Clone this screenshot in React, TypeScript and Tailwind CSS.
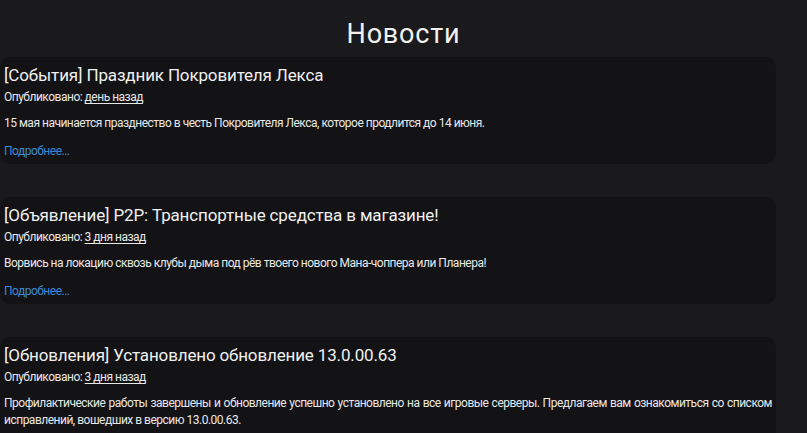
import React from "react";

const items = [
  {
    title: "[События] Праздник Покровителя Лекса",
    when: "день назад",
    body: "15 мая начинается празднество в честь Покровителя Лекса, которое продлится до 14 июня.",
  },
  {
    title: "[Объявление] P2P: Транспортные средства в магазине!",
    when: "3 дня назад",
    body: "Ворвись на локацию сквозь клубы дыма под рёв твоего нового Мана-чоппера или Планера!",
  },
  {
    title: "[Обновления] Установлено обновление 13.0.00.63",
    when: "3 дня назад",
    body: "Профилактические работы завершены и обновление успешно установлено на все игровые серверы. Предлагаем вам ознакомиться со списком исправлений, вошедших в версию 13.0.00.63.",
  },
];

export default function App() {
  return (
    <div
      className="min-h-[433px] h-[433px] overflow-hidden bg-[#1a1a1c] text-white"
      style={{ fontFamily: 'Roboto, "Open Sans", sans-serif' }}
    >
      <h1 className="pt-[19px] text-center text-[27px] leading-[30px] tracking-[0.8px] text-[#f2f2f2]">Новости</h1>
      <div className="mt-[8px] flex w-[776px] flex-col gap-[33px]">
        {items.map((it) => (
          <div key={it.title} className="rounded-[11px] bg-[#131315] px-[4px] pt-[5px] pb-[4px]">
            <h2 className="text-[17px] leading-[26px] tracking-[-0.15px] text-[#f0f0f0]">{it.title}</h2>
            <div className="text-[12px] leading-[18px] tracking-[-0.5px] text-[#e8e8e8]">
              Опубликовано: <span className="underline underline-offset-2">{it.when}</span>
            </div>
            <p className="mt-[9px] text-justify text-[12px] leading-[17px] tracking-[-0.5px] text-[#e8e8e8]">{it.body}</p>
            <div className="mt-[10px] text-[12px] leading-[18px] tracking-[-0.5px] text-[#3d8ad4]">Подробнее...</div>
          </div>
        ))}
      </div>
    </div>
  );
}
